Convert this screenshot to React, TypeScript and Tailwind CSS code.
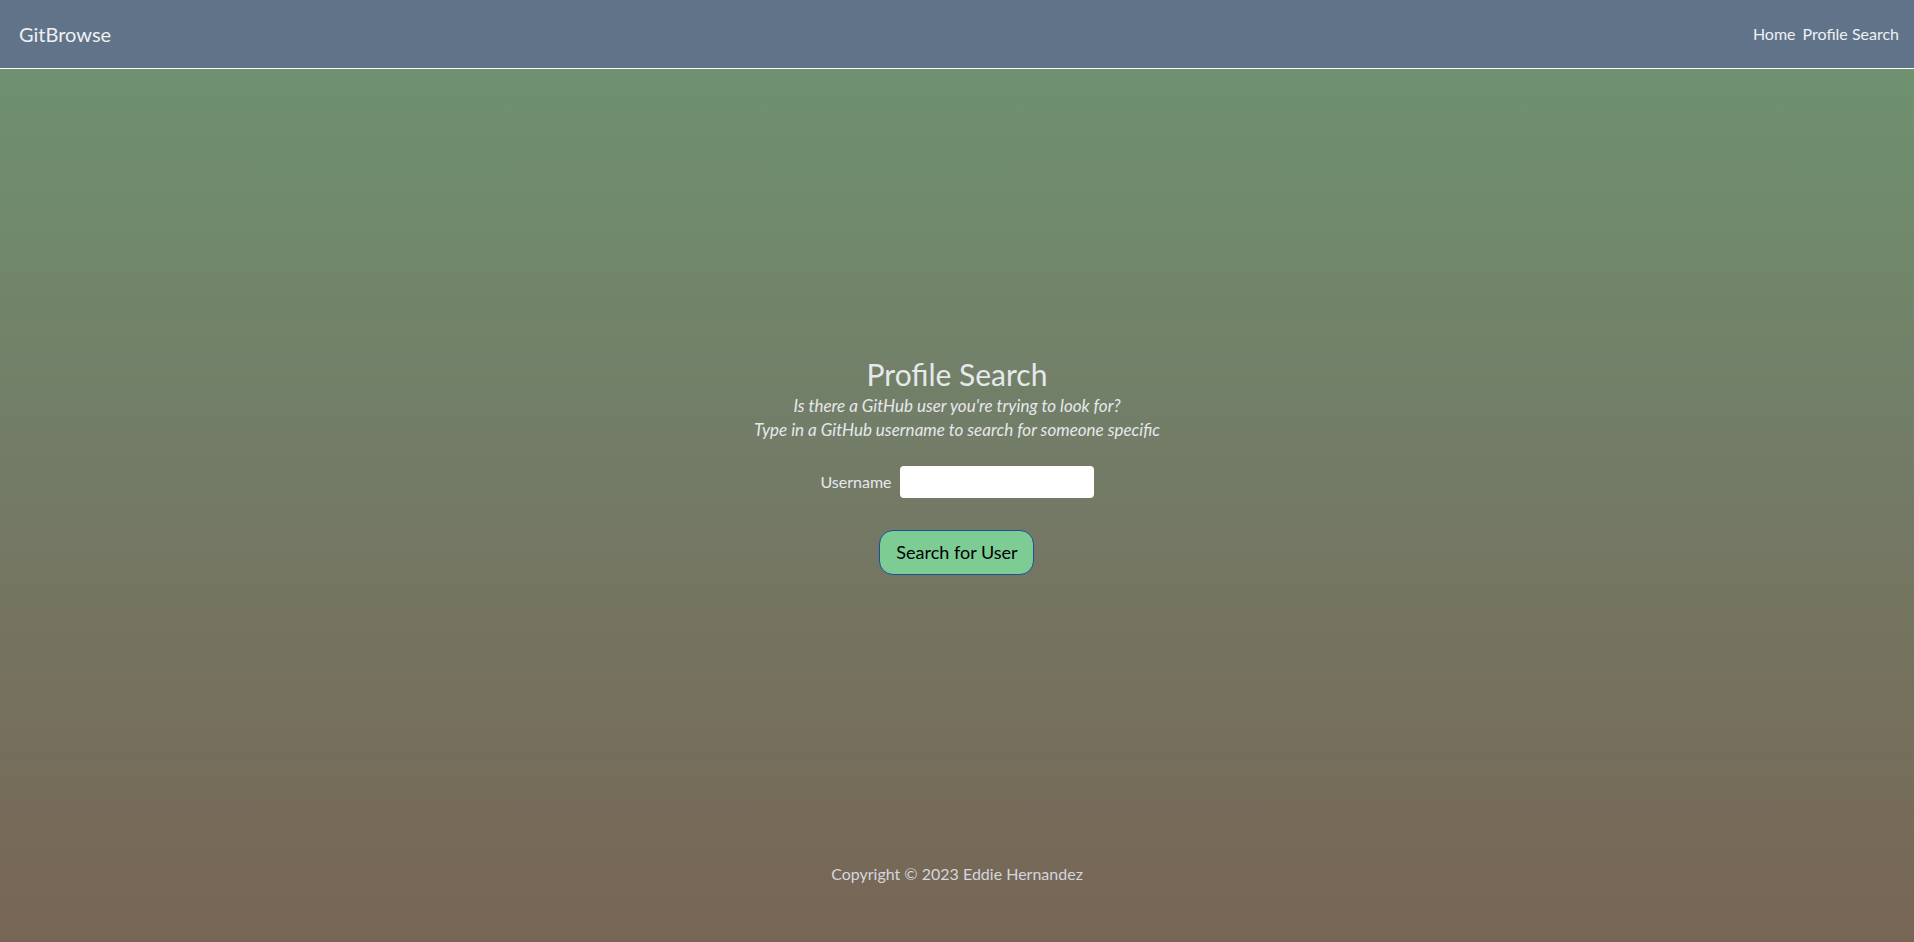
export default function App() {
  return (
    <div
      className="flex min-h-screen flex-col bg-gradient-to-b from-[#6d9572] via-[#737b66] to-[#776555] text-[#e6e8ec]"
      style={{ fontFamily: "Lato, 'Noto Sans', sans-serif" }}
    >
      <nav className="flex h-[69px] items-center justify-between border-b border-white bg-[#617389] pl-[19px] pr-[15px]">
        <a href="#" className="text-[20px] text-[#eef0f3]">
          GitBrowse
        </a>
        <div className="flex gap-[7px] text-[16px] text-[#eef0f3]">
          <a href="#">Home</a>
          <a href="#">Profile Search</a>
        </div>
      </nav>

      <main className="flex flex-1 flex-col items-center justify-center pt-[22px]">
        <h1 className="text-[30px] leading-[40px]">Profile Search</h1>
        <p className="text-[17px] italic leading-[24px]">Is there a GitHub user you're trying to look for?</p>
        <p className="text-[17px] italic leading-[24px]">Type in a GitHub username to search for someone specific</p>

        <form className="mt-[24px] flex flex-col items-center" onSubmit={(e) => e.preventDefault()}>
          <label className="flex items-center gap-2 text-[16px]">
            Username
            <input type="text" className="h-[32px] w-[194px] rounded-[4px] bg-white px-2 text-black outline-none" />
          </label>
          <button
            type="submit"
            className="mt-[32px] h-[45px] w-[155px] rounded-[14px] border border-[#1a4fa0] bg-[#7dcc94] text-[18px] text-black"
          >
            Search for User
          </button>
        </form>
      </main>

      <footer className="pb-[56px] pt-[24px] text-center text-[16px] leading-[24px] text-[#d3d7de]">
        Copyright © 2023 Eddie Hernandez
      </footer>
    </div>
  );
}
